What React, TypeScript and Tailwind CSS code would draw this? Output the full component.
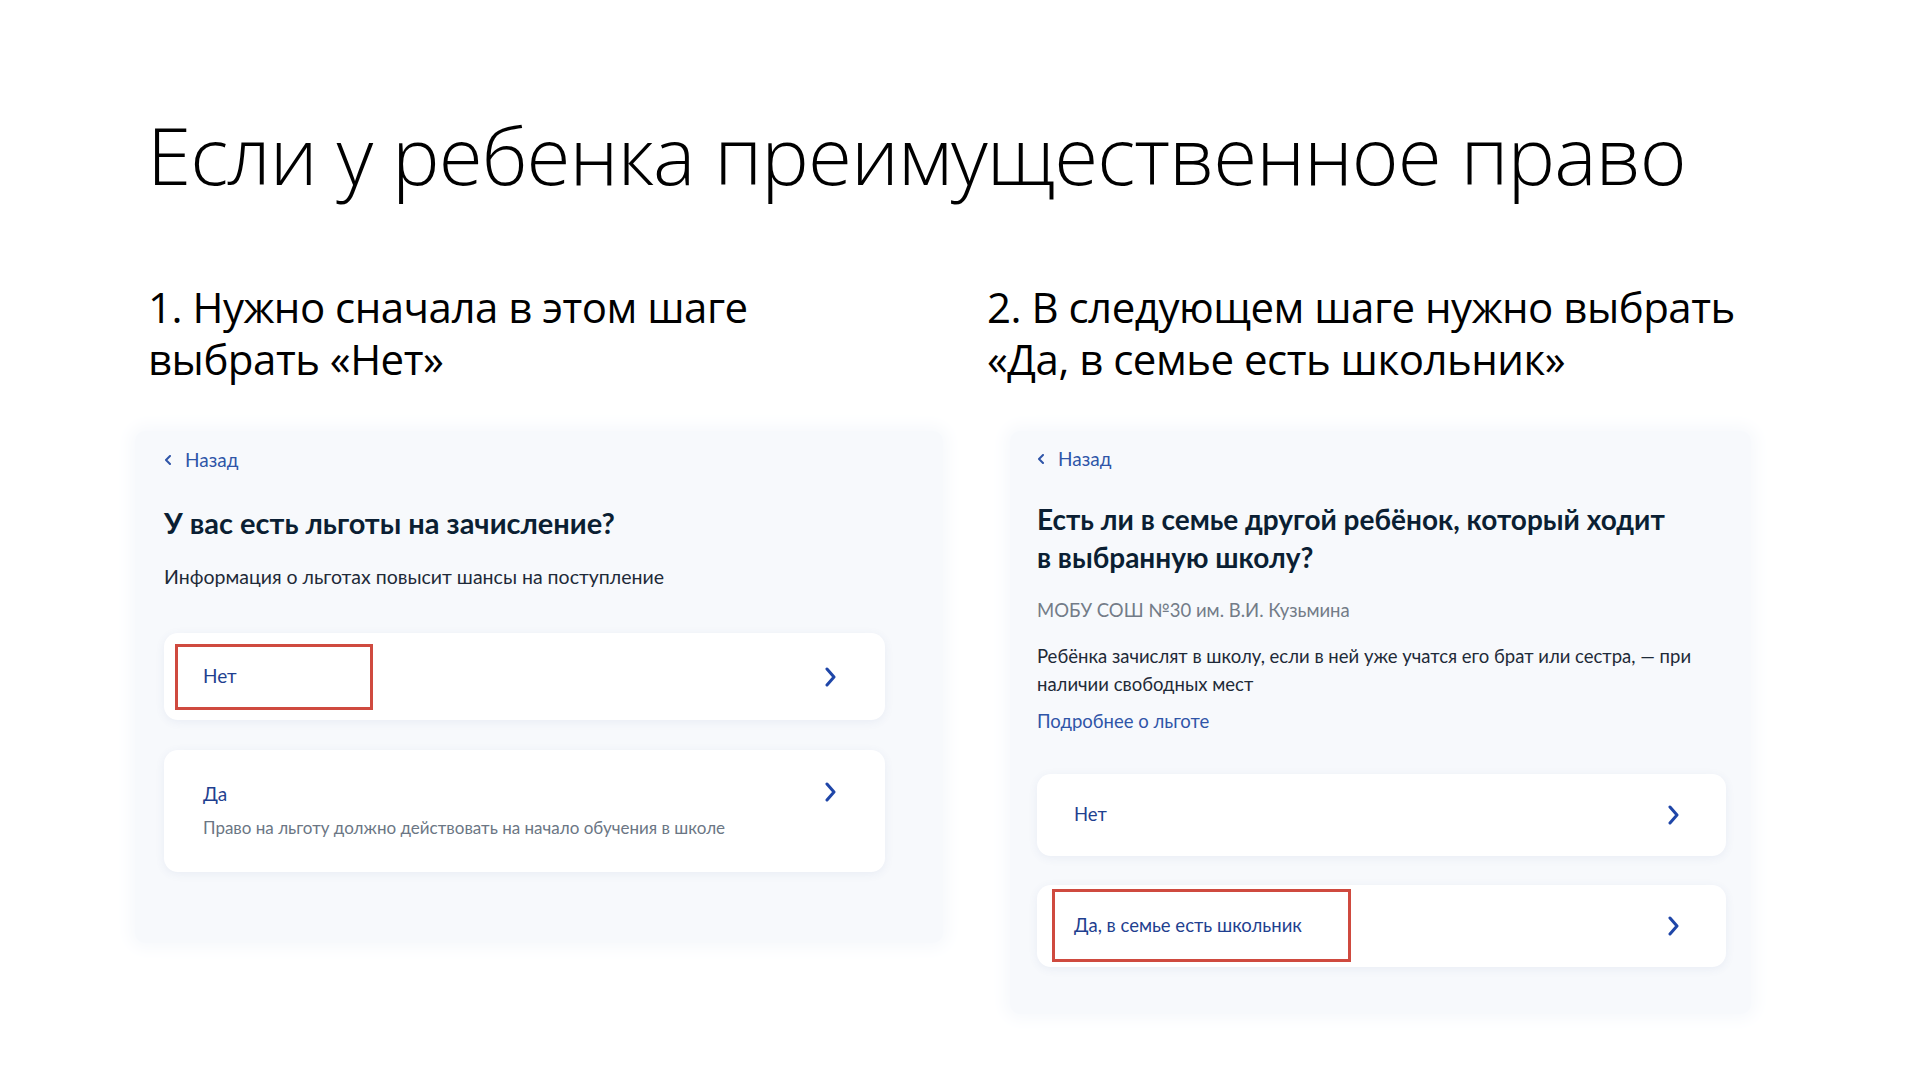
import React from "react";

const Chevron = () => (
  <svg width="12" height="20" viewBox="0 0 12 20" className="shrink-0">
    <polyline
      points="2,2 9,10 2,18"
      fill="none"
      stroke="#1f46a8"
      strokeWidth="3"
      strokeLinecap="round"
      strokeLinejoin="round"
    />
  </svg>
);

const Back = () => (
  <div className="flex items-center gap-[13px] text-[19px] leading-[24px] text-[#2f55a8]">
    <svg width="8" height="10" viewBox="0 0 8 10">
      <polyline
        points="6,1 2,5 6,9"
        fill="none"
        stroke="#2f55a8"
        strokeWidth="2"
        strokeLinecap="round"
        strokeLinejoin="round"
      />
    </svg>
    <span>Назад</span>
  </div>
);

const Mark = ({ className }: { className: string }) => (
  <div className={"absolute border-[3px] border-[#cf4a3f] " + className} />
);

export default function App() {
  return (
    <div className="w-[1920px] h-[1080px] bg-white overflow-hidden font-['Open_Sans',sans-serif] text-black">
      <h1 className="pl-[147px] pt-[104px] text-[80px] leading-[100px] font-light tracking-[-1px]">
        Если у ребенка преимущественное право
      </h1>

      <div className="flex mt-[77px]">
        {/* step 1 */}
        <div className="w-[987px] shrink-0 pl-[148px] flex flex-col">
          <p className="text-[42px] leading-[52px] tracking-[-0.5px] h-[104px]">
            1. Нужно сначала в этом шаге
            <br />
            выбрать «Нет»
          </p>
          <div className="ml-[-13px] mt-[46px] w-[808px] h-[512px] bg-[#f7f9fc] rounded-[10px] shadow-[0_0_16px_6px_#f7f9fc] pl-[29px] pt-[17px] font-['Lato',sans-serif]">
            <Back />
            <h2 className="mt-[33px] text-[29px] leading-[36px] font-bold text-[#0b1f33]">
              У вас есть льготы на зачисление?
            </h2>
            <p className="mt-[24px] text-[19.5px] leading-[24px] text-[#1e2a38]">
              Информация о льготах повысит шансы на поступление
            </p>
            <div className="relative mt-[44px] w-[721px] h-[87px] bg-white rounded-[14px] shadow-[0_2px_10px_rgba(60,90,150,0.08)] flex items-center justify-between pl-[39px] pr-[48px]">
              <Mark className="left-[11px] top-[11px] w-[198px] h-[66px]" />
              <span className="text-[19px] text-[#1f3f8f]">Нет</span>
              <Chevron />
            </div>
            <div className="relative mt-[30px] w-[721px] h-[122px] bg-white rounded-[14px] shadow-[0_2px_10px_rgba(60,90,150,0.08)] flex items-start justify-between pl-[39px] pr-[48px] pt-[32px]">
              <div className="flex flex-col">
                <span className="text-[19px] leading-[24px] text-[#1f3f8f]">Да</span>
                <span className="mt-[12px] text-[17px] leading-[20px] text-[#6b7684]">
                  Право на льготу должно действовать на начало обучения в школе
                </span>
              </div>
              <Chevron />
            </div>
          </div>
        </div>

        {/* step 2 */}
        <div className="w-[933px] shrink-0 flex flex-col">
          <p className="text-[42px] leading-[52px] tracking-[-0.5px] h-[104px]">
            2. В следующем шаге нужно выбрать
            <br />
            «Да, в семье есть школьник»
          </p>
          <div className="ml-[23px] mt-[46px] w-[741px] h-[583px] bg-[#f7f9fc] rounded-[10px] shadow-[0_0_16px_6px_#f7f9fc] pl-[27px] pt-[16px] font-['Lato',sans-serif]">
            <Back />
            <h2 className="mt-[29px] text-[28px] leading-[38px] font-bold text-[#0b1f33]">
              Есть ли в семье другой ребёнок, который ходит
              <br />в выбранную школу?
            </h2>
            <p className="mt-[22px] text-[18.5px] leading-[24px] text-[#737c88]">
              МОБУ СОШ №30 им. В.И. Кузьмина
            </p>
            <p className="mt-[20px] text-[18.5px] leading-[28px] text-[#1e2a38] w-[685px]">
              Ребёнка зачислят в школу, если в ней уже учатся его брат или сестра, — при наличии свободных мест
            </p>
            <p className="mt-[9px] text-[18.5px] leading-[28px] text-[#2f55a8]">Подробнее о льготе</p>
            <div className="relative mt-[39px] w-[689px] h-[82px] bg-white rounded-[14px] shadow-[0_2px_10px_rgba(60,90,150,0.08)] flex items-center justify-between pl-[37px] pr-[46px]">
              <span className="text-[18.5px] text-[#1f3f8f]">Нет</span>
              <Chevron />
            </div>
            <div className="relative mt-[29px] w-[689px] h-[82px] bg-white rounded-[14px] shadow-[0_2px_10px_rgba(60,90,150,0.08)] flex items-center justify-between pl-[37px] pr-[46px]">
              <Mark className="left-[15px] top-[4px] w-[299px] h-[73px]" />
              <span className="text-[18.5px] text-[#1f3f8f]">Да, в семье есть школьник</span>
              <Chevron />
            </div>
          </div>
        </div>
      </div>
    </div>
  );
}
